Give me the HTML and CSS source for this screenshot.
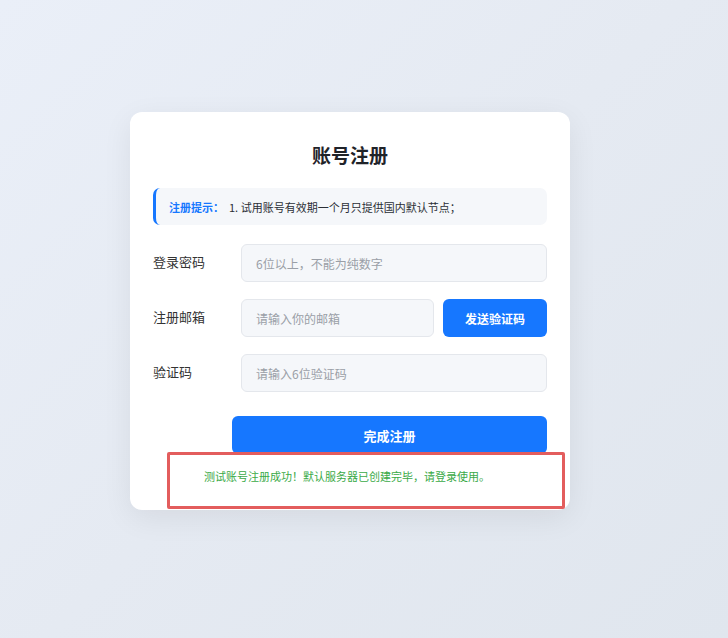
FILE: index.html
```html
<!DOCTYPE html>
<html lang="zh-CN">
<head>
<meta charset="UTF-8">
<meta name="viewport" content="width=device-width, initial-scale=1.0">
<title>账号注册</title>
<link rel="stylesheet" href="styles.css">
</head>
<body>
<div class="register-card">
  <h2 class="title">账号注册</h2>
  <div class="notice">
    <span class="notice-label">注册提示：</span>
    <span class="notice-text">1. 试用账号有效期一个月只提供国内默认节点；</span>
  </div>
  <div class="form-row">
    <label>登录密码</label>
    <input type="password" placeholder="6位以上，不能为纯数字">
  </div>
  <div class="form-row">
    <label>注册邮箱</label>
    <input type="text" class="email" placeholder="请输入你的邮箱">
    <button class="send-btn">发送验证码</button>
  </div>
  <div class="form-row">
    <label>验证码</label>
    <input type="text" placeholder="请输入6位验证码">
  </div>
  <button class="submit-btn">完成注册</button>
  <div class="message">测试账号注册成功！默认服务器已创建完毕，请登录使用。</div>
</div>
</body>
</html>
```

FILE: styles.css
```css
body {
  font-family: "Noto Sans CJK SC", "Noto Sans", sans-serif;
  margin: 0;
  height: 638px;
  background: linear-gradient(135deg, #eaeff8 0%, #e5eaf2 50%, #e0e6ee 100%);
  color: #333;
  overflow: hidden;
}
.register-card {
  width: 440px;
  box-sizing: border-box;
  margin: 112px 0 0 130px;
  padding: 29px 23px 1px 23px;
  background: #fff;
  border-radius: 12px;
  box-shadow: 0 8px 30px rgba(0,0,0,0.07);
}
.title {
  margin: 0;
  text-align: center;
  font-size: 19px;
  line-height: 28px;
  font-weight: 700;
  color: #1f2329;
}
.notice {
  margin-top: 19px;
  height: 37px;
  display: flex;
  align-items: center;
  padding-left: 13px;
  background: #f5f7fa;
  border-left: 3px solid #1677ff;
  border-radius: 7px;
  font-size: 11px;
}
.notice-label {
  color: #1677ff;
  font-weight: 700;
  margin-right: 5px;
}
.notice-text {
  color: #2b2f36;
}
.form-row {
  display: flex;
  align-items: center;
  gap: 9px;
  margin-top: 17px;
}
.notice + .form-row {
  margin-top: 19px;
}
.form-row label {
  width: 79px;
  font-size: 13px;
  line-height: 18px;
  margin-top: -2px;
  color: #333;
}
.form-row input {
  flex: 1;
  height: 38px;
  box-sizing: border-box;
  padding: 0 14px;
  background: #f5f7fa;
  border: 1px solid #e4e7ec;
  border-radius: 6px;
  font-family: inherit;
  font-size: 12px;
  color: #333;
  outline: none;
}
.form-row input::placeholder {
  color: #9a9fa7;
}
.send-btn {
  width: 104px;
  height: 38px;
  border: none;
  border-radius: 6px;
  background: #1677ff;
  color: #fff;
  font-family: inherit;
  font-size: 12px;
  font-weight: 700;
  cursor: pointer;
}
.submit-btn {
  display: block;
  width: 315px;
  height: 38px;
  margin: 24px 0 0 79px;
  border: none;
  border-radius: 6px;
  background: #1677ff;
  color: #fff;
  font-family: inherit;
  font-size: 13px;
  font-weight: 700;
  cursor: pointer;
}
.message {
  position: relative;
  margin: -2px -18px 0 14px;
  padding: 12px 10px 21px 34px;
  line-height: 18px;
  background: #fff;
  border: 3px solid #e35d5d;
  border-radius: 2px;
  font-size: 11px;
  color: #3aaa47;
}
```
